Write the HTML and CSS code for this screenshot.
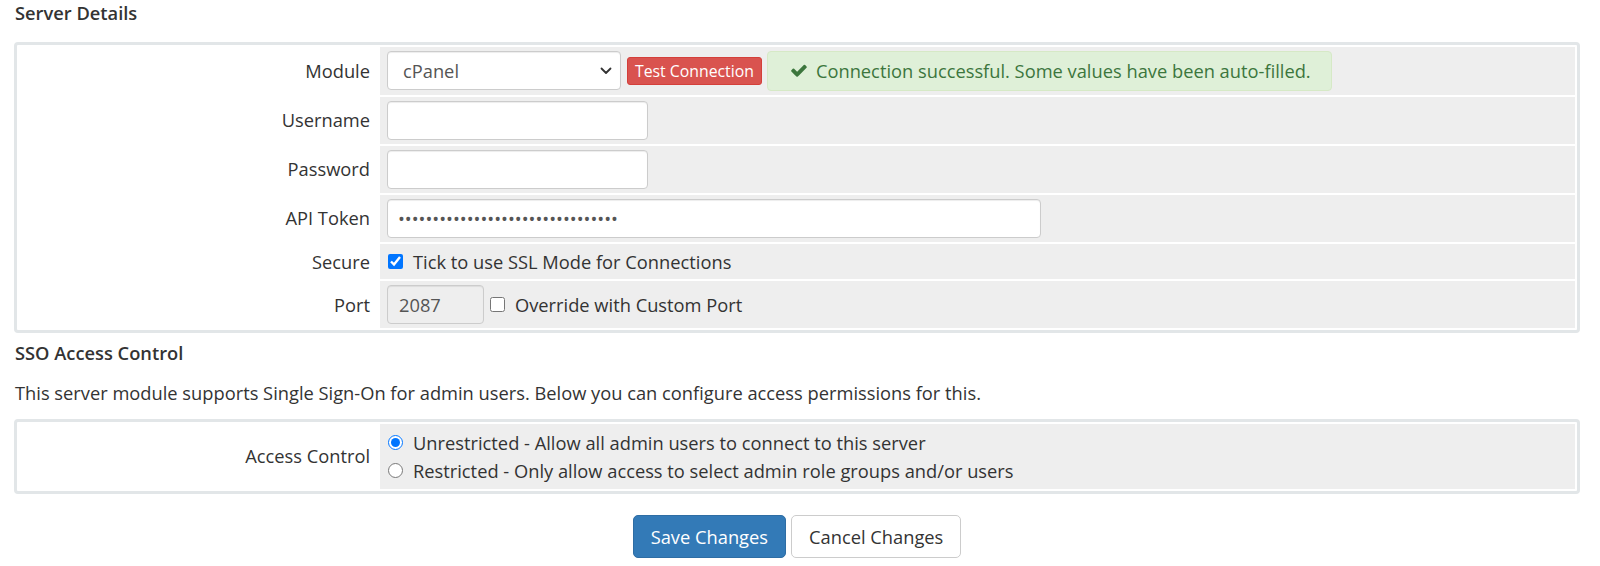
FILE: index.html
```html
<!DOCTYPE html>
<html lang="en">
<head>
<meta charset="utf-8">
<title>Server Details</title>
<link rel="stylesheet" href="styles.css">
</head>
<body>
<div class="page">
  <h2 class="section-title">Server Details</h2>
  <table class="form">
    <tr>
      <td class="fieldlabel">Module</td>
      <td class="fieldarea">
        <div class="inline-group">
          <span class="select-wrap">
            <select class="form-control select-module"><option>cPanel</option></select>
            <svg class="chevron" viewBox="0 0 12 8" aria-hidden="true"><path d="M1.5 1.5 L6 6 L10.5 1.5" fill="none" stroke="#333" stroke-width="1.8" stroke-linecap="round" stroke-linejoin="round"/></svg>
          </span>
          <button type="button" class="btn btn-test">Test Connection</button>
          <div class="alert-success">
            <svg class="check" viewBox="110 280 1580 1230" aria-hidden="true"><path fill="#3c763d" d="M1671 566q0 40-28 68l-724 724-136 136q-28 28-68 28t-68-28l-136-136-362-362q-28-28-28-68t28-68l136-136q28-28 68-28t68 28l294 295 656-657q28-28 68-28t68 28l136 136q28 28 28 68z"/></svg>
            <span>Connection successful. Some values have been auto-filled.</span>
          </div>
        </div>
      </td>
    </tr>
    <tr>
      <td class="fieldlabel">Username</td>
      <td class="fieldarea"><input type="text" class="form-control input-medium"></td>
    </tr>
    <tr>
      <td class="fieldlabel">Password</td>
      <td class="fieldarea"><input type="password" class="form-control input-medium"></td>
    </tr>
    <tr>
      <td class="fieldlabel">API Token</td>
      <td class="fieldarea"><input type="password" class="form-control input-large input-token" value="abcdefghijklmnopqrstuvwxyz123456"></td>
    </tr>
    <tr class="compact">
      <td class="fieldlabel">Secure</td>
      <td class="fieldarea"><label class="check-label"><input type="checkbox" checked><span>Tick to use SSL Mode for Connections</span></label></td>
    </tr>
    <tr>
      <td class="fieldlabel">Port</td>
      <td class="fieldarea">
        <div class="inline-group port-group">
          <input type="text" class="form-control input-port" value="2087" disabled>
          <label class="check-label"><input type="checkbox"><span>Override with Custom Port</span></label>
        </div>
      </td>
    </tr>
  </table>

  <h2 class="section-title sso-title">SSO Access Control</h2>
  <p class="intro">This server module supports Single Sign-On for admin users. Below you can configure access permissions for this.</p>

  <table class="form">
    <tr class="radio-row">
      <td class="fieldlabel">Access Control</td>
      <td class="fieldarea">
        <label class="radio-label"><input type="radio" name="access" checked><span>Unrestricted - Allow all admin users to connect to this server</span></label>
        <label class="radio-label"><input type="radio" name="access"><span>Restricted - Only allow access to select admin role groups and/or users</span></label>
      </td>
    </tr>
  </table>

  <div class="btn-container">
    <button type="button" class="btn btn-primary">Save Changes</button>
    <button type="button" class="btn btn-default">Cancel Changes</button>
  </div>
</div>
</body>
</html>
```

FILE: styles.css
```css
* {
  box-sizing: border-box;
}

html,
body {
  margin: 0;
  padding: 0;
  background: #fff;
}

body {
  font-family: "Open Sans", "Liberation Sans", sans-serif;
  font-size: 18.3px;
  line-height: 25.7px;
  color: #333;
}

.page {
  padding: 0 20px 0 14px;
}

.section-title {
  margin: 0 0 16px 1px;
  font-size: 18.3px;
  font-weight: 600;
  line-height: 25.7px;
}

.sso-title {
  margin-top: 7px;
  margin-bottom: 14px;
}

.intro {
  margin: 0 0 13px 1px;
}

.form {
  width: 1566px;
  border: 3px solid #e2e6e8;
  border-radius: 4px;
  border-collapse: separate;
  border-spacing: 2px;
  background: #fff;
}

.fieldlabel {
  width: 359px;
  padding: 0 8px 0 0;
  text-align: right;
  white-space: nowrap;
  background: #fff;
  vertical-align: middle;
}

.fieldarea {
  padding: 4px 7px;
  background: #eee;
  vertical-align: middle;
}

.compact .fieldarea {
  padding: 5px 7px;
}

.radio-row .fieldarea {
  padding: 5px 7px 4px;
}

.inline-group {
  display: flex;
  align-items: center;
  gap: 6px;
}

.port-group {
  gap: 5px;
}

.form-control {
  display: block;
  height: 39px;
  padding: 0 12px;
  font-family: inherit;
  font-size: 18.3px;
  color: #555;
  background: #fff;
  border: 1px solid #ccc;
  border-radius: 4px;
  box-shadow: inset 0 1px 1px rgba(0, 0, 0, 0.075);
  outline: none;
}

.input-medium {
  width: 261px;
}

.input-large {
  width: 654px;
}

.input-token {
  padding-left: 10px;
}

.input-port {
  width: 97px;
  padding-left: 11px;
  background: #eee;
  color: #555;
}

.select-wrap {
  position: relative;
  display: block;
}

.select-module {
  width: 234px;
  padding-left: 15px;
  appearance: none;
  -webkit-appearance: none;
}

.chevron {
  position: absolute;
  top: 16px;
  right: 9px;
  width: 12px;
  height: 8px;
  pointer-events: none;
}

.btn {
  display: inline-block;
  font-family: inherit;
  cursor: pointer;
  border: 1px solid transparent;
  border-radius: 4px;
}

.btn-test {
  height: 28px;
  padding: 0 7px;
  font-size: 15.8px;
  line-height: 26px;
  color: #fff;
  background: #d9534f;
  border-color: #d43f3a;
  border-radius: 3px;
}

.alert-success {
  display: flex;
  align-items: center;
  gap: 9px;
  height: 40px;
  margin-left: -1px;
  padding: 0 20px 0 23px;
  color: #3c763d;
  background: #dff0d8;
  border: 1px solid #d6e9c6;
  border-radius: 4px;
}

.check {
  width: 16px;
  height: 13px;
  flex: none;
}

.check-label,
.radio-label {
  display: flex;
  align-items: center;
  gap: 10px;
  margin: 0;
  font-weight: normal;
  cursor: pointer;
}

.check-label input,
.radio-label input {
  width: 15px;
  height: 15px;
  margin: 0 0 0 1px;
  flex: none;
}

.radio-label {
  height: 28px;
}

.btn-container {
  width: 1566px;
  margin-top: 21px;
  display: flex;
  justify-content: center;
  gap: 5px;
}

.btn-primary,
.btn-default {
  height: 43px;
  padding: 0 17px;
  font-size: 18.3px;
  line-height: 41px;
  border-radius: 5px;
}

.btn-primary {
  color: #fff;
  background: #337ab7;
  border-color: #2e6da4;
}

.btn-default {
  color: #333;
  background: #fff;
  border-color: #ccc;
}
```
